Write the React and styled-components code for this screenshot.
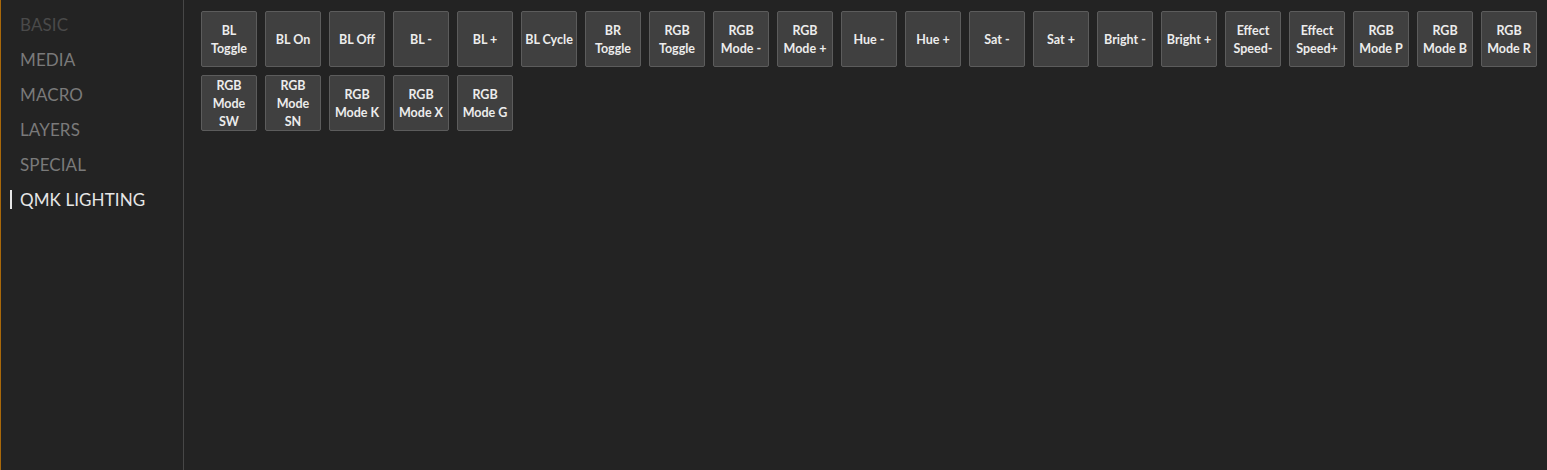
import React from "react";
import styled, { createGlobalStyle } from "styled-components";

const Global = createGlobalStyle`
  html, body { margin: 0; padding: 0; background: #232323; }
  body { font-family: Lato, "Noto Sans", sans-serif; }
  #root { height: 100vh; }
`;

const Page = styled.div`
  display: flex;
  height: 470px;
  background: #232323;
  border-left: 1px solid #a8680a;
  box-sizing: border-box;
`;

const Sidebar = styled.nav`
  width: 182px;
  flex: none;
  border-right: 1px solid #474747;
  padding-top: 7px;
  display: flex;
  flex-direction: column;
`;

const NavItem = styled.div`
  position: relative;
  height: 35px;
  line-height: 35px;
  padding-left: 19px;
  font-size: 17px;
  color: ${(p) => (p.$active ? "#e6e6e6" : p.$dim ? "#4a4a4a" : "#7a7a7a")};
  letter-spacing: 0.1px;
  &::before {
    content: "";
    display: ${(p) => (p.$active ? "block" : "none")};
    position: absolute;
    left: 9px;
    top: 8px;
    width: 2px;
    height: 19px;
    background: #e6e6e6;
  }
`;

const Grid = styled.div`
  flex: 1;
  padding: 11px 0 0 17px;
  display: flex;
  flex-wrap: wrap;
  align-content: flex-start;
  gap: 8px;
`;

const Key = styled.div`
  width: 56px;
  height: 56px;
  box-sizing: border-box;
  padding-top: 2px;
  background: #404040;
  border: 1px solid #5c5c5c;
  border-radius: 2px;
  display: flex;
  align-items: center;
  justify-content: center;
  text-align: center;
  color: #ececec;
  font-weight: 700;
  font-size: 12.5px;
  line-height: 18px;
  white-space: pre-line;
`;

const nav = [
  { label: "BASIC", dim: true },
  { label: "MEDIA" },
  { label: "MACRO" },
  { label: "LAYERS" },
  { label: "SPECIAL" },
  { label: "QMK LIGHTING", active: true },
];

const keys = [
  "BL\nToggle", "BL On", "BL Off", "BL -", "BL +", "BL Cycle", "BR\nToggle",
  "RGB\nToggle", "RGB\nMode -", "RGB\nMode +", "Hue -", "Hue +", "Sat -",
  "Sat +", "Bright -", "Bright +", "Effect\nSpeed-", "Effect\nSpeed+",
  "RGB\nMode P", "RGB\nMode B", "RGB\nMode R", "RGB\nMode\nSW", "RGB\nMode\nSN",
  "RGB\nMode K", "RGB\nMode X", "RGB\nMode G",
];

export default function App() {
  return (
    <>
      <Global />
      <Page>
        <Sidebar>
          {nav.map((n) => (
            <NavItem key={n.label} $active={n.active} $dim={n.dim}>
              {n.label}
            </NavItem>
          ))}
        </Sidebar>
        <Grid>
          {keys.map((k) => (
            <Key key={k}>{k}</Key>
          ))}
        </Grid>
      </Page>
    </>
  );
}
